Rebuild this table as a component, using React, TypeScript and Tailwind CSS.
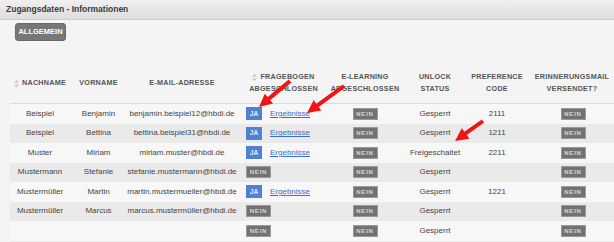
import React from "react";

type Row = {
  last: string;
  first: string;
  email: string;
  done: boolean;
  status: string;
  code: string;
  stub?: boolean;
};

const rows: Row[] = [
  { last: "Beispiel", first: "Benjamin", email: "benjamin.beispiel12@hbdi.de", done: true, status: "Gesperrt", code: "2111" },
  { last: "Beispiel", first: "Bettina", email: "bettina.beispiel31@hbdi.de", done: true, status: "Gesperrt", code: "1211" },
  { last: "Muster", first: "Miriam", email: "miriam.muster@hbdi.de", done: true, status: "Freigeschaltet", code: "2211" },
  { last: "Mustermann", first: "Stefanie", email: "stefanie.mustermann@hbdi.de", done: false, status: "Gesperrt", code: "" },
  { last: "Mustermüller", first: "Martin", email: "martin.mustermueller@hbdi.de", done: true, status: "Gesperrt", code: "1221" },
  { last: "Mustermüller", first: "Marcus", email: "marcus.mustermüller@hbdi.de", done: false, status: "Gesperrt", code: "" },
  { last: "", first: "", email: "", done: false, status: "Gesperrt", code: "" },
  { last: "", first: "", email: "", done: false, status: "", code: "", stub: true },
];

const cols = "grid grid-cols-[60px_57px_110px_93px_70px_70px_54px_90px]";

function SortIcon() {
  return (
    <svg width="5" height="7" viewBox="0 0 5 7" className="inline-block mr-[3px] align-middle">
      <polygon points="2.5,0 5,2.6 0,2.6" fill="#c4c4c4" />
      <polygon points="2.5,7 5,4.4 0,4.4" fill="#c4c4c4" />
    </svg>
  );
}

function Nein({ stub }: { stub?: boolean }) {
  return (
    <span className="inline-flex items-center justify-center w-[25px] h-[12px] bg-[#727272] border border-[#9a9a9a] text-[#d8d8d8] text-[6px] font-bold tracking-[0.8px] leading-none">
      {stub ? "" : "NEIN"}
    </span>
  );
}

function Ja() {
  return (
    <span className="inline-flex items-center justify-center w-[16px] h-[13px] bg-[#4f82d3] text-[#e6eefb] text-[6.5px] font-bold leading-none">
      JA
    </span>
  );
}

function Arrow({ tx, ty, px, py }: { tx: number; ty: number; px: number; py: number }) {
  const dx = px - tx;
  const dy = py - ty;
  const len = Math.sqrt(dx * dx + dy * dy);
  const ux = dx / len;
  const uy = dy / len;
  const nx = -uy;
  const ny = ux;
  const headLen = 13;
  const headW = 6.5;
  const sw = 2;
  const bx = px - ux * headLen;
  const by = py - uy * headLen;
  const pts = [
    [tx + nx * sw, ty + ny * sw],
    [bx + nx * sw, by + ny * sw],
    [bx + nx * headW, by + ny * headW],
    [px, py],
    [bx - nx * headW, by - ny * headW],
    [bx - nx * sw, by - ny * sw],
    [tx - nx * sw, ty - ny * sw],
  ]
    .map((p) => `${p[0].toFixed(1)},${p[1].toFixed(1)}`)
    .join(" ");
  return <polygon points={pts} fill="#f01414" />;
}

export default function App() {
  return (
    <div
      className="relative w-[614px] h-[242px] overflow-hidden bg-[#f4f4f4] text-[#444]"
      style={{ fontFamily: '"Liberation Sans", Arial, sans-serif' }}
    >
      <div className="h-[20px] flex items-center pl-[6px] bg-gradient-to-b from-[#f0f0f0] to-[#dedede] border-b border-[#cfcfcf] text-[8.5px] font-bold text-[#3a3a3a]">
        Zugangsdaten - Informationen
      </div>
      <div className="pl-[15px] pt-[3px]">
        <div className="w-[51px] h-[18px] flex items-center justify-center rounded-[3px] bg-[#777] border border-[#6a6a6a] text-white text-[7.5px] font-bold">
          ALLGEMEIN
        </div>
      </div>
      <div className="ml-[10px] mt-[22px]">
        <div className={`${cols} h-[41px] items-center border-b border-[#dcdcdc] text-[7.2px] font-bold tracking-[0.25px] text-[#555] leading-[12px] text-center`}>
          <div><SortIcon />NACHNAME</div>
          <div>VORNAME</div>
          <div>E-MAIL-ADRESSE</div>
          <div><SortIcon />FRAGEBOGEN<br />ABGESCHLOSSEN</div>
          <div>E-LEARNING<br />ABGESCHLOSSEN</div>
          <div>UNLOCK<br />STATUS</div>
          <div>PREFERENCE<br />CODE</div>
          <div className="pl-[6px]">ERINNERUNGSMAIL<br />VERSENDET?</div>
        </div>
        {rows.map((r, i) => (
          <div
            key={i}
            className={`${cols} h-[19.5px] items-center text-[8px] text-center ${i % 2 === 1 ? "bg-[#eaeaea]" : "bg-[#f7f7f7]"}`}
          >
            <div>{r.last}</div>
            <div>{r.first}</div>
            <div>{r.email}</div>
            <div className="flex items-center pl-[9px] gap-[8px]">
              {r.done ? (
                <>
                  <Ja />
                  <span className="text-[#3a70c6] underline">Ergebnisse</span>
                </>
              ) : (
                <Nein stub={r.stub} />
              )}
            </div>
            <div className="flex justify-center"><Nein stub={r.stub} /></div>
            <div>{r.status}</div>
            <div>{r.code}</div>
            <div className="flex justify-center pl-[8px]"><Nein stub={r.stub} /></div>
          </div>
        ))}
      </div>
      <svg className="absolute inset-0 pointer-events-none" width="614" height="242">
        <Arrow tx={290} ty={81} px={259} py={107} />
        <Arrow tx={344} ty={86} px={307} py={113} />
        <Arrow tx={483} ty={121} px={455} py={141} />
      </svg>
    </div>
  );
}
